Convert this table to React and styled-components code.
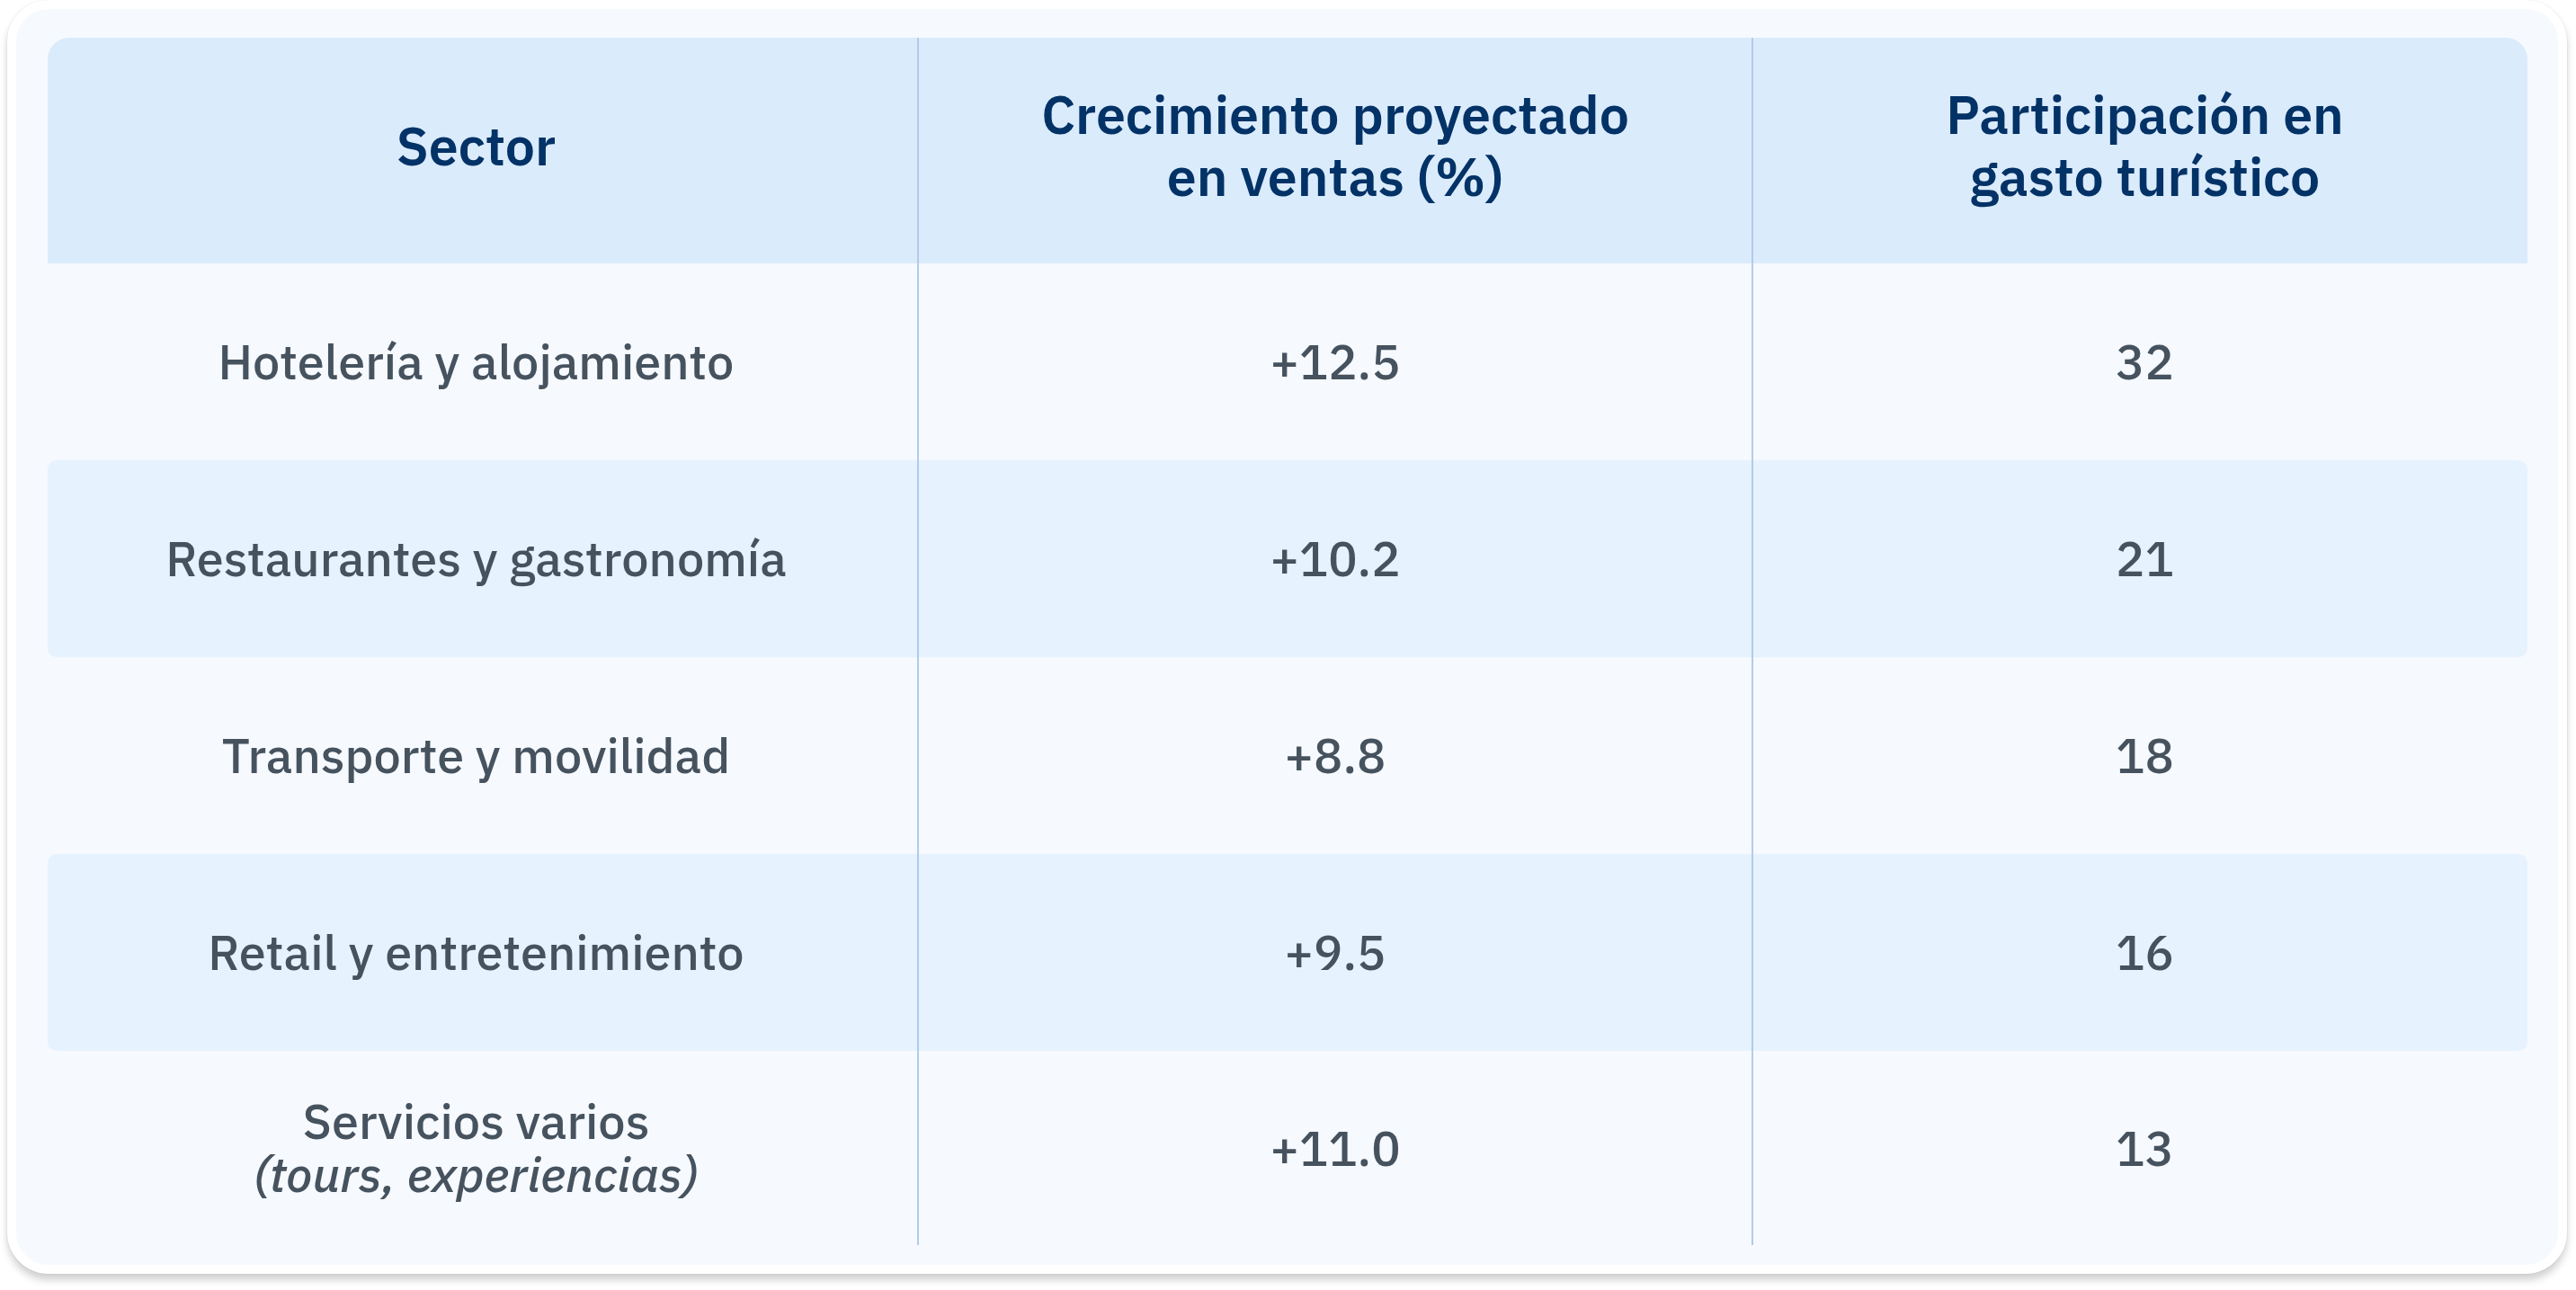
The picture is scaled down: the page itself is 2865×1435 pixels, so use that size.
import React from "react";
import styled, { createGlobalStyle } from "styled-components";

const Global = createGlobalStyle`
  html, body { margin: 0; padding: 0; background: #ffffff; }
  body { font-family: "IBM Plex Sans", Roboto, "Liberation Sans", sans-serif; }
`;

const Page = styled.div`
  padding: 0 10px 18px 8px;
`;

const Card = styled.div`
  width: 2847px;
  box-sizing: border-box;
  background: #f6f9fe;
  border: 10px solid #ffffff;
  border-radius: 46px;
  box-shadow: 0 7px 8px rgba(0, 0, 0, 0.18), 0 0 2px rgba(0, 0, 0, 0.12);
  padding: 32px 34px 22px 35px;
`;

const Table = styled.div`
  display: grid;
  grid-template-columns: 969px 928px 861px;
`;

const Row = styled.div`
  display: contents;
`;

const HeadCell = styled.div`
  background: #daebfc;
  height: 251px;
  display: flex;
  align-items: center;
  justify-content: center;
  text-align: center;
  color: #033266;
  font-weight: 600;
  font-size: 59px;
  line-height: 69px;
  box-sizing: border-box;
  padding-bottom: 11px;
  padding-right: ${(p) => (p.$first ? "14px" : "0")};
  padding-left: ${(p) => (p.$last ? "10px" : "0")};
  border-right: ${(p) => (p.$last ? "none" : "2px solid #b3cbe8")};
  border-top-left-radius: ${(p) => (p.$first ? "24px" : "0")};
  border-top-right-radius: ${(p) => (p.$last ? "24px" : "0")};
`;

const Cell = styled.div`
  background: ${(p) => (p.$striped ? "#e6f2fe" : "transparent")};
  height: ${(p) => p.$h}px;
  display: flex;
  flex-direction: column;
  align-items: center;
  justify-content: center;
  text-align: center;
  color: #46535f;
  font-size: 54px;
  font-weight: 500;
  line-height: 59px;
  box-sizing: border-box;
  padding-right: ${(p) => (p.$first ? "14px" : "0")};
  padding-left: ${(p) => (p.$last ? "10px" : "0")};
  border-right: ${(p) => (p.$last ? "none" : "2px solid #b3cbe8")};
  border-top-left-radius: ${(p) => (p.$first && p.$striped ? "10px" : "0")};
  border-bottom-left-radius: ${(p) => (p.$first && p.$striped ? "10px" : "0")};
  border-top-right-radius: ${(p) => (p.$last && p.$striped ? "10px" : "0")};
  border-bottom-right-radius: ${(p) => (p.$last && p.$striped ? "10px" : "0")};
`;

const Main = styled.span`
  display: block;
`;

const Note = styled.span`
  display: block;
  font-style: italic;
`;

const rows = [
  { sector: "Hotelería y alojamiento", growth: "+12.5", share: "32" },
  { sector: "Restaurantes y gastronomía", growth: "+10.2", share: "21" },
  { sector: "Transporte y movilidad", growth: "+8.8", share: "18" },
  { sector: "Retail y entretenimiento", growth: "+9.5", share: "16" },
  { sector: "Servicios varios", note: "(tours, experiencias)", growth: "+11.0", share: "13" },
];

export default function App() {
  return (
    <Page>
      <Global />
      <Card>
        <Table>
          <Row>
            <HeadCell $first>Sector</HeadCell>
            <HeadCell>
              Crecimiento proyectado
              <br />
              en ventas (%)
            </HeadCell>
            <HeadCell $last>
              Participación en
              <br />
              gasto turístico
            </HeadCell>
          </Row>
          {rows.map((r, i) => {
            const striped = i % 2 === 1;
            const h = i === rows.length - 1 ? 216 : 219;
            return (
              <Row key={r.sector}>
                <Cell $first $striped={striped} $h={h}>
                  <Main>{r.sector}</Main>
                  {r.note && <Note>{r.note}</Note>}
                </Cell>
                <Cell $striped={striped} $h={h}>{r.growth}</Cell>
                <Cell $last $striped={striped} $h={h}>{r.share}</Cell>
              </Row>
            );
          })}
        </Table>
      </Card>
    </Page>
  );
}
